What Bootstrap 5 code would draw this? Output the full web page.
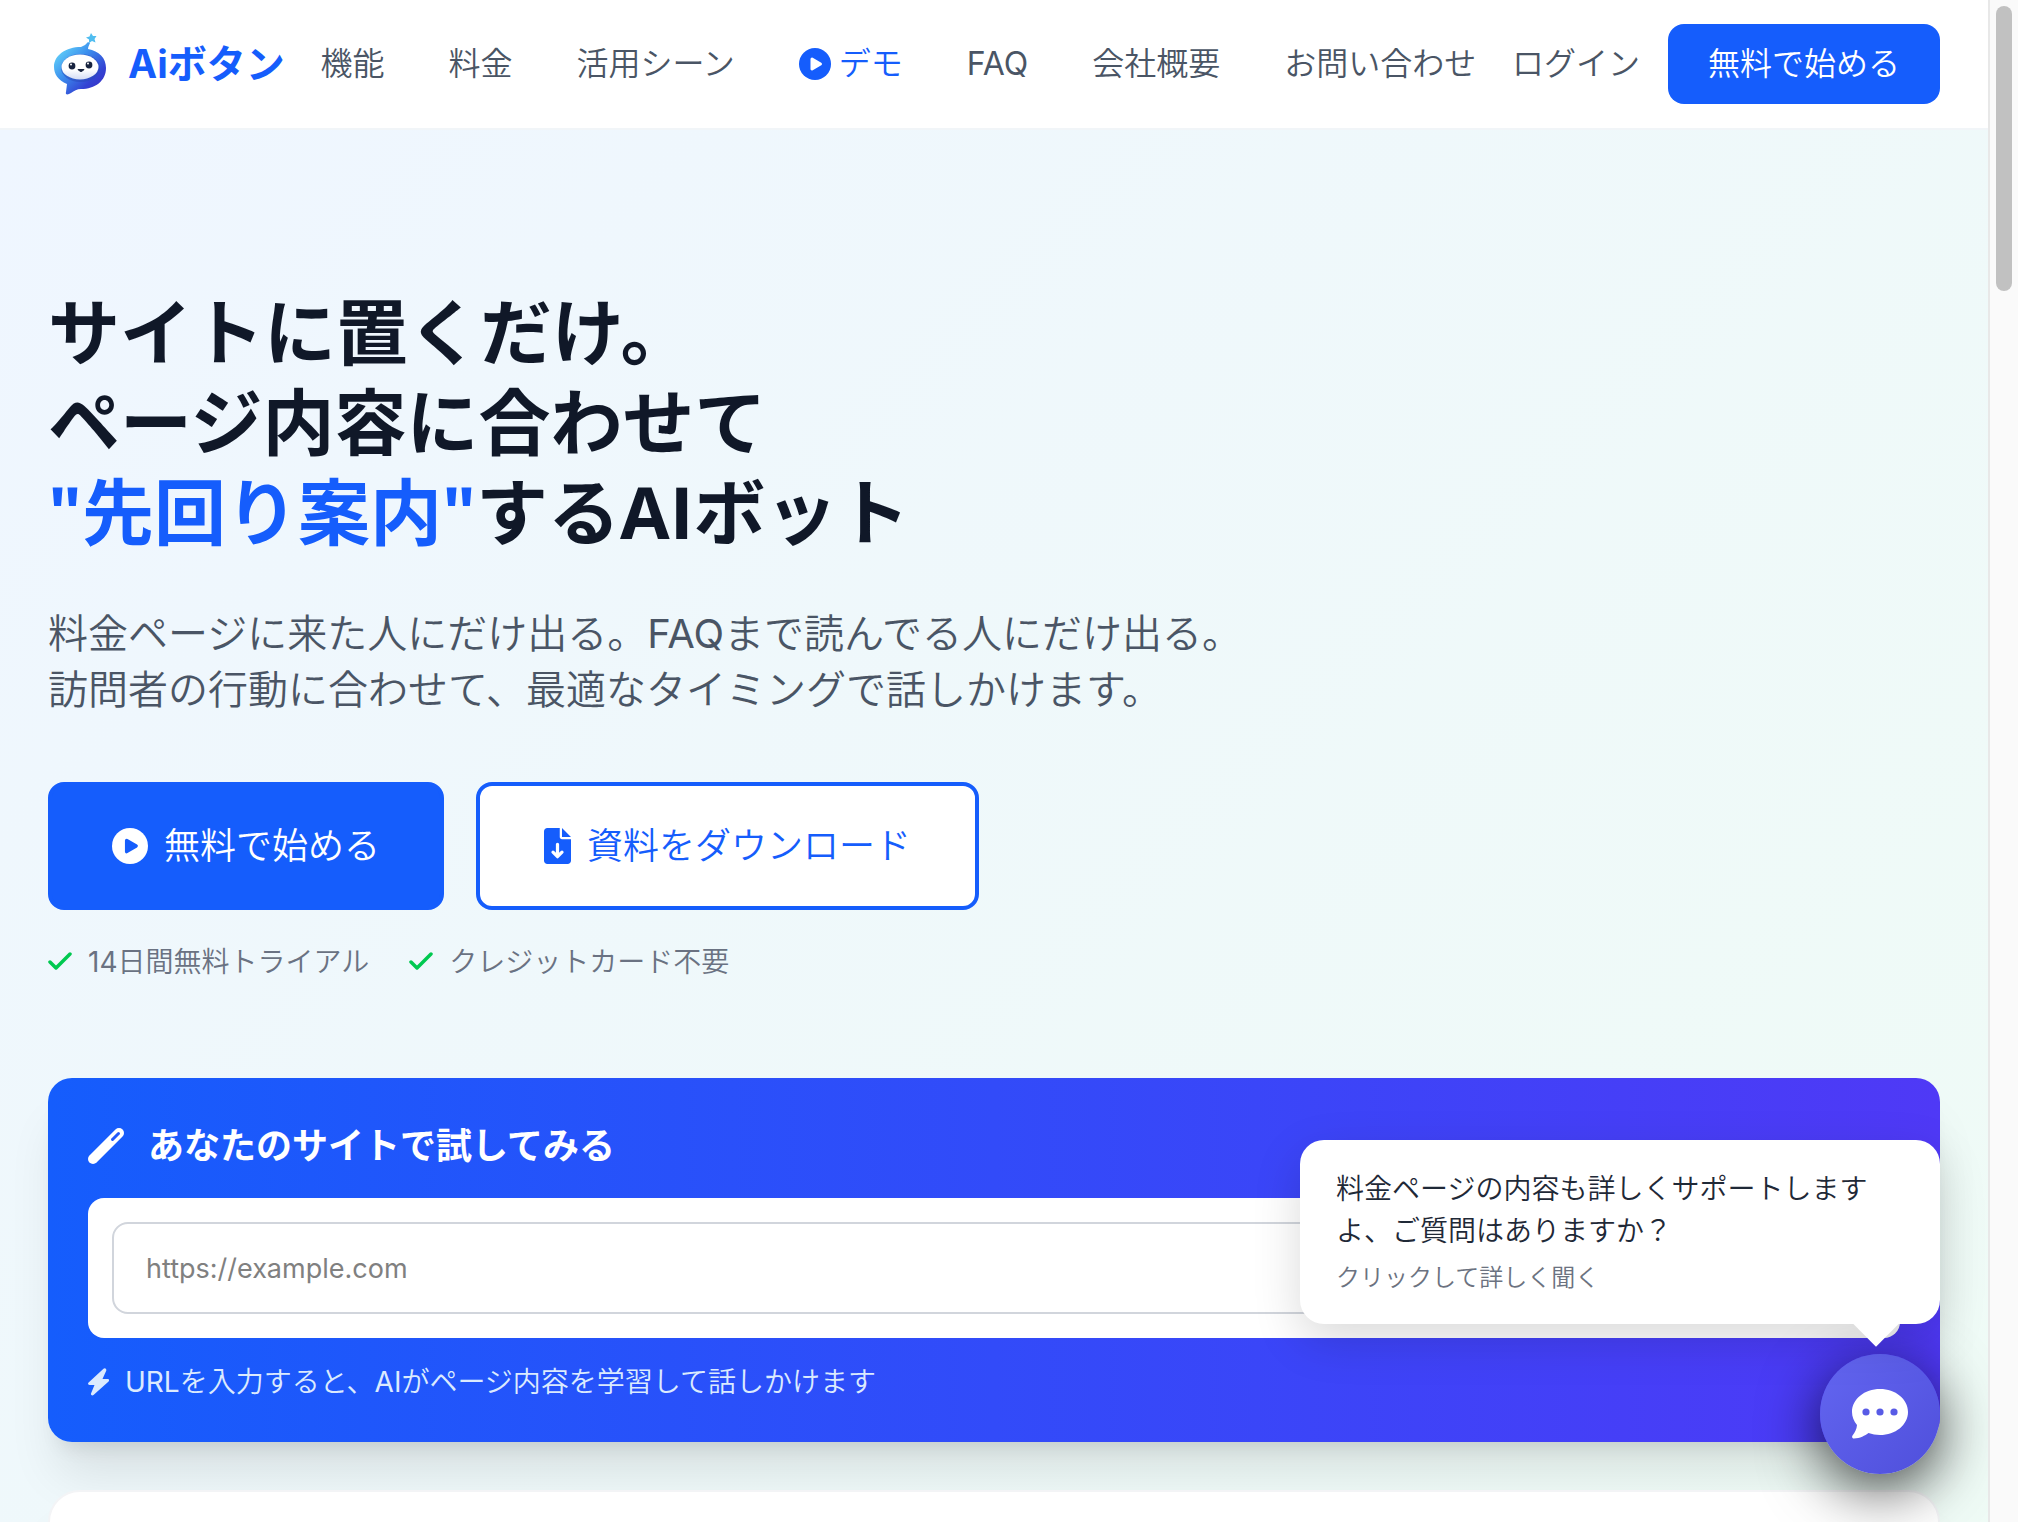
<!DOCTYPE html>
<html lang="ja">
<head>
<meta charset="utf-8">
<meta name="viewport" content="width=device-width, initial-scale=1">
<title>Aiボタン</title>
<link href="https://cdn.jsdelivr.net/npm/bootstrap@5.3.0/dist/css/bootstrap.min.css" rel="stylesheet">
<style>
:root{--brand:#155dfc;--ink:#101828;--slate:#4a5565;--muted:#6a7282}
body{font-family:Inter,"Noto Sans CJK JP DemiLight","Noto Sans CJK JP",sans-serif;color:var(--ink);font-weight:400}
a{text-decoration:none}
svg{flex:none;display:block}
.shell{height:100vh}
.page-col{min-width:0}
.gutter{padding-left:48px;padding-right:48px}
.topbar{height:130px;border-bottom:2px solid #f1f5f8;background:#fff}
.brand-link{font-family:Inter,"Noto Sans CJK JP",sans-serif;gap:16px;font-size:39px;line-height:56px;font-weight:700;color:var(--brand)}
.nav-row{gap:64px}
.nav-row a,.login-link{font-size:32px;line-height:48px;color:var(--slate);white-space:nowrap}
.nav-row a.is-demo{color:var(--brand);gap:8px}
.login-link{margin-right:28px}
.btn-start{background:var(--brand);color:#fff;font-size:32px;line-height:48px;padding:16px 40px;border:0;border-radius:16px;white-space:nowrap}
.hero{background:linear-gradient(to bottom right,#eff6ff,#effcf4);padding-top:156px;min-height:2000px}
.hero-title{font-family:"Open Sans","Noto Sans CJK JP",sans-serif;font-size:72px;line-height:90px;font-weight:700;margin:0 0 50px}
.hero-title span{color:var(--brand)}
.hero-text{font-size:40px;line-height:56px;color:var(--slate);margin:0 0 64px}
.actions{gap:32px;margin-bottom:32px}
.btn-hero{font-size:36px;line-height:56px;gap:16px;padding:32px 60px;border:4px solid var(--brand);border-radius:16px;background:var(--brand);color:#fff}
.btn-hero.outline{background:#fff;color:var(--brand);padding:32px 64px}
.perks{gap:40px;font-size:28px;line-height:40px;color:var(--muted);margin:0 0 96px}
.perks li{gap:16px}
.try-box{background:linear-gradient(to right,#155dfc,#4f39f6);border-radius:24px;padding:40px;margin-bottom:48px;box-shadow:0 40px 50px -10px rgba(0,0,0,.1),0 16px 20px -12px rgba(0,0,0,.1)}
.try-title{font-family:Inter,"Noto Sans CJK JP",sans-serif;font-size:36px;line-height:56px;font-weight:600;color:#fff;gap:24px;margin:0 0 24px}
.url-wrap{background:#fff;border-radius:16px;padding:24px;margin-bottom:24px}
.url-input{font-size:27px;line-height:40px;height:92px;padding:24px 32px;border:2px solid #d1d5dc;border-radius:16px}
.url-input::placeholder{color:#808080}
.try-note{font-size:28px;line-height:40px;color:#dbeafe;gap:16px;margin:0}
.next-box{background:#fff;border:2px solid #f3f4f6;border-radius:32px;height:480px;box-shadow:0 40px 50px -10px rgba(0,0,0,.1),0 16px 20px -12px rgba(0,0,0,.1)}
.chat-dock{right:48px;bottom:48px;width:640px}
.chat-bubble{display:block;width:100%;text-align:left;border:0;background:#fff;border-radius:24px;padding:28px 36px;margin-bottom:30px;font-size:28px;line-height:42px;color:#1f2937;box-shadow:0 16px 48px rgba(0,0,0,.15)}
.chat-bubble::after{content:"";position:absolute;right:48px;bottom:-16px;width:32px;height:32px;background:#fff;transform:rotate(45deg)}
.chat-hint{font-size:24px;line-height:36px;color:#6b7280;margin-top:8px}
.chat-fab{width:120px;height:120px;border:0;border-radius:50%;background:linear-gradient(135deg,#6366f1,#4f4fdb);box-shadow:0 16px 60px rgba(0,0,0,.7)}
.scroll-track{width:30px;background:#fafafa;border-left:2px solid #e8e8e8;padding:6px 6px}
.scroll-thumb{height:285px;border-radius:8px;background:#c1c1c1}
</style>
</head>
<body>
<div class="shell d-flex overflow-hidden">
<div class="page-col flex-grow-1 position-relative overflow-hidden">
<header class="topbar gutter d-flex align-items-center justify-content-between">
<a href="#" class="brand-link d-flex align-items-center">
<svg width="64" height="64" viewBox="0 0 64 64" aria-hidden="true">
<defs>
<linearGradient id="lg" x1="0" y1=".1" x2=".9" y2="1"><stop offset="0" stop-color="#6be0fb"/><stop offset=".4" stop-color="#3c90ee"/><stop offset=".75" stop-color="#3343d3"/><stop offset="1" stop-color="#3b2dc4"/></linearGradient>
<linearGradient id="face" x1="0" y1="0" x2="0" y2="1"><stop offset=".6" stop-color="#fff"/><stop offset="1" stop-color="#d3dcf5"/></linearGradient>
</defs>
<path fill="url(#lg)" d="M33 15q4-1 7-5l2 1q-2 4-2 6c11 2 18 9 18 19 0 13-11 21-25 21-4 0-7 2-10 4-3 2-6 2-5-1l1-8C10 48 6 42 6 35 6 23 18 15 33 15z"/>
<ellipse cx="32.500" cy="36" rx="19.500" ry="14" fill="#2847b8" opacity=".5"/>
<ellipse cx="32" cy="35" rx="18.500" ry="12.500" fill="url(#face)"/>
<circle cx="24" cy="34" r="3.400" fill="#17233f"/><circle cx="41" cy="33" r="3.400" fill="#17233f"/>
<circle cx="23" cy="32.500" r="1" fill="#fff"/><circle cx="40" cy="31.500" r="1" fill="#fff"/>
<path d="M30 37.500q3 4 6 0z" fill="#17233f" stroke="#17233f" stroke-linejoin="round"/>
<path fill="#50bdf0" d="M43 1l2 3 3.500 0-2 3 1 3.500-3.500-1.500-3 2 0-3.500-3-2 3.500-1z"/>
</svg>
<span>Aiボタン</span>
</a>
<nav class="nav-row d-flex align-items-center">
<a href="#">機能</a><a href="#">料金</a><a href="#">活用シーン</a>
<a href="#" class="is-demo d-flex align-items-center"><svg width="32" height="32" viewBox="0 0 32 32"><circle cx="16" cy="16" r="16" fill="currentColor"/><path d="M13 11l8.500 5-8.500 5z" fill="#fff" stroke="#fff" stroke-width="3" stroke-linejoin="round"/></svg>デモ</a>
<a href="#">FAQ</a><a href="#">会社概要</a><a href="#">お問い合わせ</a>
</nav>
<div class="d-flex align-items-center">
<a href="#" class="login-link">ログイン</a>
<button type="button" class="btn-start">無料で始める</button>
</div>
</header>
<main class="hero gutter">
<h1 class="hero-title">サイトに置くだけ。<br>ページ内容に合わせて<br><span>"先回り案内"</span>するAIボット</h1>
<p class="hero-text">料金ページに来た人にだけ出る。FAQまで読んでる人にだけ出る。<br>訪問者の行動に合わせて、最適なタイミングで話しかけます。</p>
<div class="actions d-flex">
<button type="button" class="btn-hero d-flex align-items-center"><svg width="36" height="36" viewBox="0 0 32 32"><circle cx="16" cy="16" r="16" fill="#fff"/><path d="M13 11l8.500 5-8.500 5z" fill="#155dfc" stroke="#155dfc" stroke-width="3" stroke-linejoin="round"/></svg>無料で始める</button>
<button type="button" class="btn-hero outline d-flex align-items-center"><svg width="27" height="36" viewBox="0 0 384 512"><path fill="currentColor" d="M224 0v128c0 18 14 32 32 32h128v304c0 26-22 48-48 48H48c-26 0-48-22-48-48V48C0 22 22 0 48 0zM256 0l128 128H256z"/><path d="M192 232v166M128 344l64 64 64-64" fill="none" stroke="#fff" stroke-width="46" stroke-linecap="round" stroke-linejoin="round"/></svg>資料をダウンロード</button>
</div>
<ul class="perks list-unstyled d-flex">
<li class="d-flex align-items-center"><svg width="24" height="28" viewBox="0 0 24 28" fill="none" stroke="#00c950" stroke-width="3.500" stroke-linecap="round" stroke-linejoin="round"><path d="M2 14l6 6L22 6"/></svg>14日間無料トライアル</li>
<li class="d-flex align-items-center"><svg width="24" height="28" viewBox="0 0 24 28" fill="none" stroke="#00c950" stroke-width="3.500" stroke-linecap="round" stroke-linejoin="round"><path d="M2 14l6 6L22 6"/></svg>クレジットカード不要</li>
</ul>
<section class="try-box">
<h2 class="try-title d-flex align-items-center"><svg width="36" height="36" viewBox="0 0 36 36"><path d="M5 31L31 5" stroke="#fff" stroke-width="10" stroke-linecap="round"/><path d="M24.500 11.500l6-6" stroke="#2259fb" stroke-width="3" stroke-linecap="round"/></svg><label for="site-url">あなたのサイトで試してみる</label></h2>
<div class="url-wrap"><input type="url" id="site-url" class="form-control url-input" placeholder="https://example.com"></div>
<p class="try-note d-flex align-items-center"><svg width="21" height="28" viewBox="0 0 21 28"><path fill="currentColor" d="M17.500.5c1 .7 1 1.700.6 2.600L14.500 11H20c1 0 1.500 1.600.6 2.500L5.500 27c-1.300 1-3 0-2.500-1.500L6.500 17H1.500C0 17-.4 15.300.6 14.400L15.500.7q1-.8 2-.2z"/></svg>URLを入力すると、AIがページ内容を学習して話しかけます</p>
</section>
<section class="next-box"></section>
</main>
<aside class="chat-dock position-absolute d-flex flex-column align-items-end">
<button type="button" class="chat-bubble position-relative">料金ページの内容も詳しくサポートしますよ、ご質問はありますか？<span class="chat-hint d-block">クリックして詳しく聞く</span></button>
<button type="button" class="chat-fab d-flex align-items-center justify-content-center" aria-label="チャット"><svg width="56" height="50" viewBox="0 0 56 50"><path fill="#fff" d="M28 0c15.500 0 28 10 28 23S43.500 46 28 46c-4 0-8-.7-11.500-2C13 46.500 8 49.500 2 49.500c-1.800 0-2.500-2-1.300-3.300C3 43.500 4.700 40 5 36 1.800 32.200 0 27.800 0 23 0 10 12.500 0 28 0z"/><g fill="#585be6"><circle cx="14" cy="23" r="3.600"/><circle cx="28" cy="23" r="3.600"/><circle cx="42" cy="23" r="3.600"/></g></svg></button>
</aside>
</div>
<div class="scroll-track flex-shrink-0" aria-hidden="true"><div class="scroll-thumb"></div></div>
</div>
<script src="https://cdn.jsdelivr.net/npm/bootstrap@5.3.0/dist/js/bootstrap.bundle.min.js"></script>
</body>
</html>
